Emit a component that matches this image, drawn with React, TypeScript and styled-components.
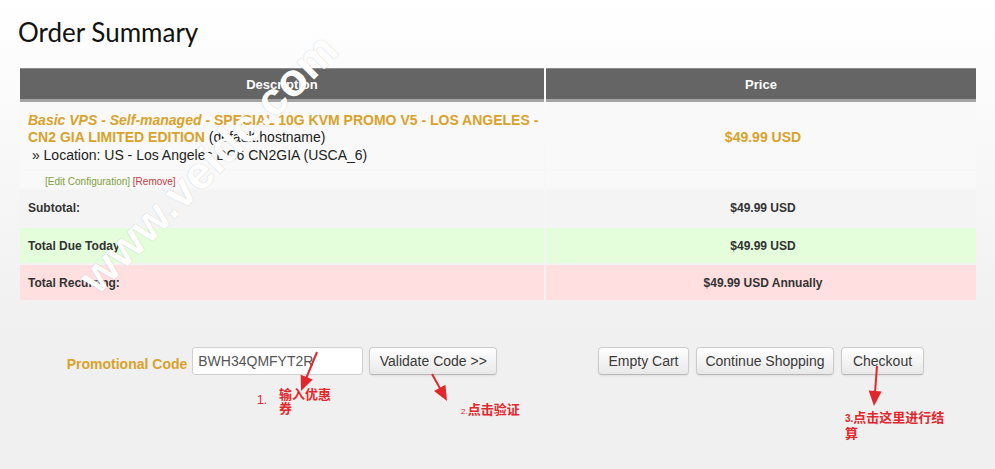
import React from "react";
import styled, { createGlobalStyle } from "styled-components";

const Global = createGlobalStyle`
  html, body { margin: 0; padding: 0; }
  body { background: #f0f0f0; font-family: "Liberation Sans", Arial, sans-serif; }
`;

const Page = styled.div`
  position: relative;
  min-height: 469px;
  box-sizing: border-box;
  padding: 0 19px 0 20px;
  background: linear-gradient(to bottom, #ffffff 0px, #f0f0f0 330px);
  overflow: hidden;
`;

const Title = styled.h1`
  margin: 0 0 0 -2px;
  padding-top: 15px;
  height: 68px;
  box-sizing: border-box;
  font-family: Lato, "Open Sans", sans-serif;
  font-weight: 400;
  font-size: 26px;
  line-height: 34px;
  color: #111;
`;

const Table = styled.div`
  display: flex;
  flex-direction: column;
  width: 956px;
`;

const Grid = styled.div<{ $gap?: number }>`
  display: grid;
  grid-template-columns: 524px 430px;
  column-gap: 2px;
  row-gap: ${(p) => p.$gap ?? 0}px;
`;

const HeadCell = styled.div`
  height: 34px;
  box-sizing: border-box;
  background: #656565;
  border-top: 1px solid #8c8c8c;
  border-bottom: 3px solid #a3a3a3;
  color: #fff;
  font-weight: bold;
  font-size: 13px;
  display: flex;
  align-items: center;
  justify-content: center;
`;

const Cell = styled.div<{ $bg?: string; $h: number; $center?: boolean }>`
  box-sizing: border-box;
  height: ${(p) => p.$h}px;
  background: ${(p) => p.$bg ?? "#f9f9f9"};
  display: flex;
  align-items: center;
  justify-content: ${(p) => (p.$center ? "center" : "flex-start")};
  padding: 0 4px 0 8px;
  font-size: 12px;
  font-weight: bold;
  color: #333;
`;

const ItemText = styled.div`
  font-size: 14px;
  font-weight: normal;
  line-height: 17.5px;
  color: #222;
  padding-top: 5px;
`;

const Product = styled.span`
  color: #d9a22a;
  font-weight: bold;
`;

const Group = styled.em`
  font-style: italic;
`;

const ItemPrice = styled.span`
  color: #d9a22a;
  font-size: 14px;
  font-weight: bold;
  padding-top: 3px;
`;

const Links = styled.div`
  padding-left: 17px;
  padding-top: 3px;
  font-size: 10px;
  font-weight: normal;
`;

const EditLink = styled.span`
  color: #7f9f3c;
`;

const RemoveLink = styled.span`
  color: #c43b3b;
`;

const Actions = styled(Grid)`
  margin-top: 47px;
  width: 956px;
`;

const ActionGroup = styled.div<{ $gap: number }>`
  display: flex;
  align-items: center;
  justify-content: center;
  gap: ${(p) => p.$gap}px;
`;

const PromoLabel = styled.span`
  color: #d9a22a;
  font-weight: bold;
  font-size: 14px;
  margin-top: 6px;
  margin-right: -1px;
`;

const PromoInput = styled.div`
  width: 171px;
  height: 28px;
  box-sizing: border-box;
  background: #fff;
  border: 1px solid #cfcfcf;
  border-radius: 3px;
  padding-left: 5px;
  display: flex;
  align-items: center;
  font-size: 14px;
  color: #555;
`;

const Button = styled.button<{ $w: number }>`
  width: ${(p) => p.$w}px;
  height: 28px;
  box-sizing: border-box;
  padding: 0;
  font-family: "Liberation Sans", Arial, sans-serif;
  font-size: 14px;
  color: #3a3a3a;
  background: linear-gradient(to bottom, #ffffff, #e8e8e8);
  border: 1px solid #cccccc;
  border-bottom-color: #b8b8b8;
  border-radius: 4px;
  box-shadow: 0 1px 2px rgba(0, 0, 0, 0.08);
`;

const Watermark = styled.div`
  position: absolute;
  left: 208px;
  top: 163px;
  transform: translate(-50%, -50%) rotate(-45deg);
  font-family: "Liberation Sans", Arial, sans-serif;
  font-weight: bold;
  font-size: 46px;
  color: #ffffff;
  text-shadow: 0 0 1px rgba(0, 0, 0, 0.25);
  white-space: nowrap;
  pointer-events: none;
`;

const Overlay = styled.svg`
  position: absolute;
  left: 0;
  top: 0;
  pointer-events: none;
`;

const Note = styled.div<{ $x: number; $y: number; $w?: number }>`
  position: absolute;
  left: ${(p) => p.$x}px;
  top: ${(p) => p.$y}px;
  ${(p) => (p.$w ? `width: ${p.$w}px;` : "white-space: nowrap;")}
  font-family: "Noto Sans CJK SC", "Liberation Sans", sans-serif;
  font-weight: bold;
  font-size: 13px;
  line-height: 14px;
  color: #e3262b;
`;

const Num = styled.span<{ $size: number; $weight?: number }>`
  font-family: "Liberation Sans", Arial, sans-serif;
  font-size: ${(p) => p.$size}px;
  font-weight: ${(p) => p.$weight ?? 700};
`;

const RED = "#e3262b";

function Arrow({ x1, y1, x2, y2 }: { x1: number; y1: number; x2: number; y2: number }) {
  const dx = x2 - x1;
  const dy = y2 - y1;
  const len = Math.hypot(dx, dy);
  const ux = dx / len;
  const uy = dy / len;
  const head = 15;
  const half = 6.5;
  const bx = x2 - ux * head;
  const by = y2 - uy * head;
  const px = -uy;
  const py = ux;
  const pts = `${x2},${y2} ${bx + px * half},${by + py * half} ${bx - px * half},${by - py * half}`;
  return (
    <g>
      <line x1={x1} y1={y1} x2={bx + ux * 2} y2={by + uy * 2} stroke={RED} strokeWidth={2} />
      <polygon points={pts} fill={RED} />
    </g>
  );
}

export default function App() {
  return (
    <>
      <Global />
      <Page>
        <Title>Order Summary</Title>
        <Table>
          <Grid>
            <HeadCell>Description</HeadCell>
            <HeadCell>Price</HeadCell>
          </Grid>
          <Grid $gap={2}>
            <Cell $h={67}>
              <ItemText>
                <Product>
                  <Group>Basic VPS - Self-managed</Group> - SPECIAL 10G KVM PROMO V5 - LOS ANGELES - CN2 GIA
                  LIMITED EDITION
                </Product>{" "}
                (default.hostname)
                <br />
                {"\u00a0» Location: US - Los Angeles DC6 CN2GIA (USCA_6)"}
              </ItemText>
            </Cell>
            <Cell $h={67} $center>
              <ItemPrice>$49.99 USD</ItemPrice>
            </Cell>
            <Cell $h={17}>
              <Links>
                <EditLink>[Edit Configuration]</EditLink> <RemoveLink>[Remove]</RemoveLink>
              </Links>
            </Cell>
            <Cell $h={17} />
            <Cell $h={36} $bg="#f4f4f4">Subtotal:</Cell>
            <Cell $h={36} $bg="#f4f4f4" $center>$49.99 USD</Cell>
            <Cell $h={35} $bg="#e4fddb">Total Due Today:</Cell>
            <Cell $h={35} $bg="#e4fddb" $center>$49.99 USD</Cell>
            <Cell $h={35} $bg="#ffdfdf">Total Recurring:</Cell>
            <Cell $h={35} $bg="#ffdfdf" $center>$49.99 USD Annually</Cell>
          </Grid>
        </Table>
        <Actions>
          <ActionGroup $gap={6}>
            <PromoLabel>Promotional Code</PromoLabel>
            <PromoInput>BWH34QMFYT2R</PromoInput>
            <Button $w={128}>Validate Code &gt;&gt;</Button>
          </ActionGroup>
          <ActionGroup $gap={7}>
            <Button $w={91}>Empty Cart</Button>
            <Button $w={138}>Continue Shopping</Button>
            <Button $w={83}>Checkout</Button>
          </ActionGroup>
        </Actions>

        <Watermark>www.veidc.com</Watermark>

        <Overlay width={995} height={469} viewBox="0 0 995 469">
          <Arrow x1={317} y1={352} x2={301} y2={391} />
          <Arrow x1={432} y1={374} x2={447} y2={401} />
          <Arrow x1={877} y1={366} x2={874} y2={406} />
        </Overlay>

        <Note $x={257} $y={392}>
          <Num $size={12} $weight={400}>1.</Num>
        </Note>
        <Note $x={279} $y={387} $w={54}>输入优惠券</Note>
        <Note $x={461} $y={402}>
          <Num $size={8} $weight={400}>2.</Num>点击验证
        </Note>
        <Note $x={845} $y={410} $w={102}>
          <Num $size={10}>3.</Num>点击这里进行结算
        </Note>
      </Page>
    </>
  );
}
